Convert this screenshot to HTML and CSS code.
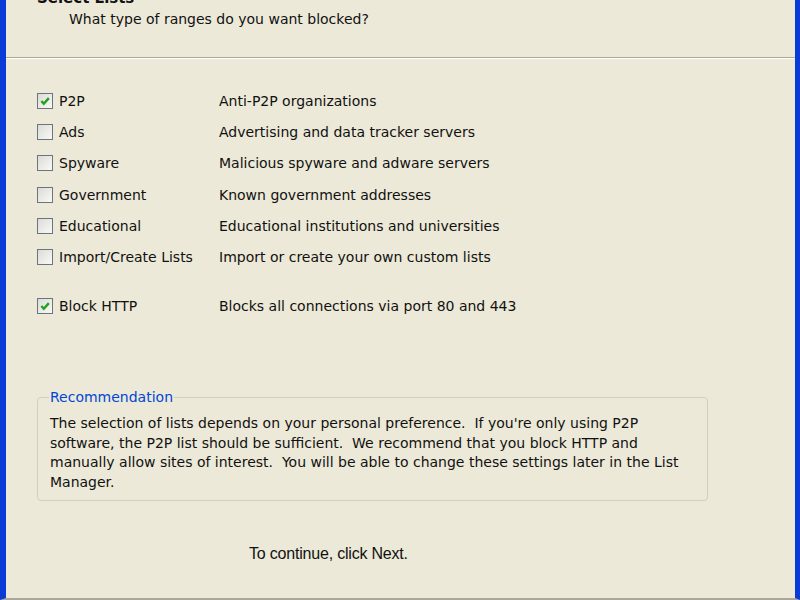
FILE: index.html
```html
<!DOCTYPE html>
<html lang="en">
<head>
    <meta charset="UTF-8">
    <title>Select Lists</title>
    <link rel="stylesheet" href="styles.css">
</head>
<body>
    <div class="wizard">
        <div class="header">
            <div class="title">Select Lists</div>
            <div class="subtitle">What type of ranges do you want blocked?</div>
        </div>

        <div class="content">
            <div class="lists">
                <div class="row">
                    <span class="check checked"><svg viewBox="0 0 10 10"><path d="M2 5 L4 7.3 L8.2 2.6"/></svg></span>
                    <span class="name">P2P</span>
                    <span class="desc">Anti-P2P organizations</span>
                </div>
                <div class="row">
                    <span class="check"></span>
                    <span class="name">Ads</span>
                    <span class="desc">Advertising and data tracker servers</span>
                </div>
                <div class="row">
                    <span class="check"></span>
                    <span class="name">Spyware</span>
                    <span class="desc">Malicious spyware and adware servers</span>
                </div>
                <div class="row">
                    <span class="check"></span>
                    <span class="name">Government</span>
                    <span class="desc">Known government addresses</span>
                </div>
                <div class="row">
                    <span class="check"></span>
                    <span class="name">Educational</span>
                    <span class="desc">Educational institutions and universities</span>
                </div>
                <div class="row">
                    <span class="check"></span>
                    <span class="name">Import/Create Lists</span>
                    <span class="desc">Import or create your own custom lists</span>
                </div>
                <div class="row spaced">
                    <span class="check checked"><svg viewBox="0 0 10 10"><path d="M2 5 L4 7.3 L8.2 2.6"/></svg></span>
                    <span class="name">Block HTTP</span>
                    <span class="desc">Blocks all connections via port 80 and 443</span>
                </div>
            </div>

            <fieldset class="group">
                <legend>Recommendation</legend>
                <p>The selection of lists depends on your personal preference.&nbsp; If you're only using P2P software, the P2P list should be sufficient.&nbsp; We recommend that you block HTTP and manually allow sites of interest.&nbsp; You will be able to change these settings later in the List Manager.</p>
            </fieldset>

            <div class="hint">To continue, click Next.</div>
        </div>
    </div>
</body>
</html>
```

FILE: styles.css
```css
* {
    margin: 0;
    padding: 0;
    box-sizing: border-box;
}

body {
    font-family: 'DejaVu Sans', sans-serif;
    font-size: 14px;
    color: #111;
    background-color: #ece9d8;
    overflow: hidden;
}

.wizard {
    height: 600px;
    display: flex;
    flex-direction: column;
    border-left: 6px solid #0b3bd6;
    border-right: 5px solid #0b3bd6;
    border-bottom: 2px solid #aca899;
    background-color: #ece9d8;
}

.header {
    height: 58px;
    padding-left: 31px;
    border-bottom: 1px solid #aca899;
    box-shadow: 0 1px 0 #ffffff;
}

.title {
    font-weight: bold;
    font-size: 15px;
    margin-top: -10px;
    line-height: 16px;
}

.subtitle {
    margin-top: 3px;
    padding-left: 32px;
    line-height: 20px;
}

.content {
    flex: 1;
    padding: 35px 0 0 31px;
    display: flex;
    flex-direction: column;
}

.lists {
    display: flex;
    flex-direction: column;
    gap: 15.2px;
}

.row {
    display: flex;
    align-items: center;
    height: 16px;
}

.row.spaced {
    margin-top: 18px;
}

.check {
    width: 16px;
    height: 16px;
    border: 1px solid #6d7480;
    background: linear-gradient(135deg, #dcdcd6, #f8f8f6);
    flex-shrink: 0;
    display: flex;
    align-items: center;
    justify-content: center;
}

.check svg {
    width: 12px;
    height: 12px;
    fill: none;
    stroke: #21a121;
    stroke-width: 2;
}

.name {
    width: 166px;
    padding-left: 6px;
}

.desc {
    white-space: nowrap;
}

.group {
    margin-top: 75px;
    width: 670px;
    height: 112px;
    border: 1px solid #d0d0bf;
    border-radius: 4px;
    padding: 0 12px 0 12px;
}

.group legend {
    color: #0046d5;
    padding: 0 1px;
    margin-left: -1px;
}

.group p {
    width: 645px;
    line-height: 19.6px;
    margin-top: 9px;
}

.hint {
    margin-top: 44px;
    padding-left: 212px;
    font-family: 'Liberation Sans', sans-serif;
    font-size: 16px;
    letter-spacing: -0.2px;
}
```
